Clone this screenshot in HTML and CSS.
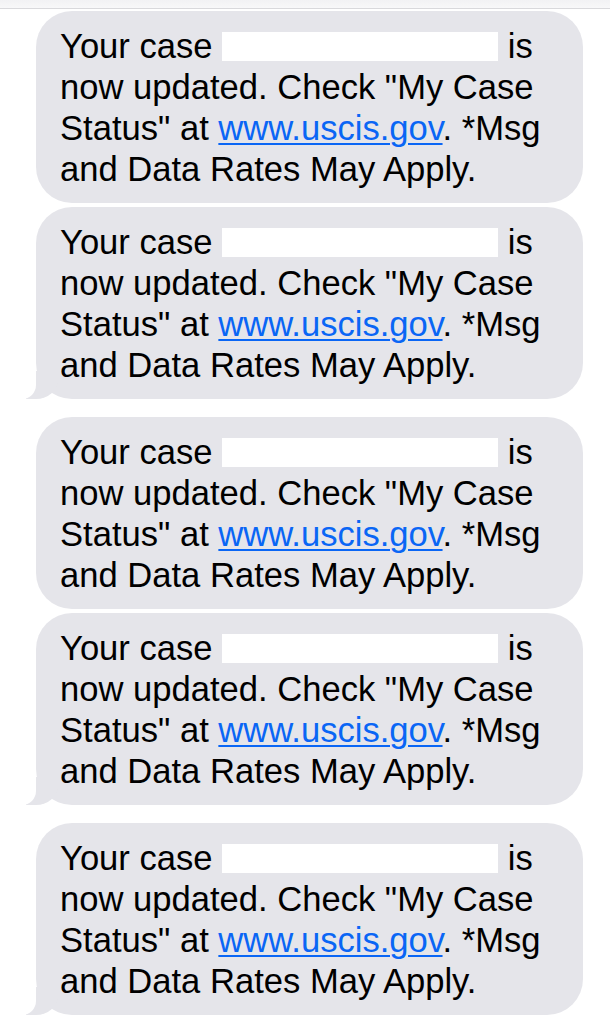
FILE: index.html
```html
<!DOCTYPE html>
<html lang="en">
<head>
  <meta charset="UTF-8">
  <title>Messages</title>
  <link rel="stylesheet" href="styles.css">
</head>
<body>

<div class="top-bar"></div>

<div class="thread">
  <div class="group">
    <div class="bubble">Your case <span class="redacted"></span> is now updated. Check "My Case Status" at <a href="#">www.uscis.gov</a>. *Msg and Data Rates May Apply.</div>
    <div class="bubble tail">Your case <span class="redacted"></span> is now updated. Check "My Case Status" at <a href="#">www.uscis.gov</a>. *Msg and Data Rates May Apply.</div>
  </div>
  <div class="group">
    <div class="bubble">Your case <span class="redacted"></span> is now updated. Check "My Case Status" at <a href="#">www.uscis.gov</a>. *Msg and Data Rates May Apply.</div>
    <div class="bubble tail">Your case <span class="redacted"></span> is now updated. Check "My Case Status" at <a href="#">www.uscis.gov</a>. *Msg and Data Rates May Apply.</div>
  </div>
  <div class="group">
    <div class="bubble tail">Your case <span class="redacted"></span> is now updated. Check "My Case Status" at <a href="#">www.uscis.gov</a>. *Msg and Data Rates May Apply.</div>
  </div>
</div>

</body>
</html>
```

FILE: styles.css
```css
body {
  margin: 0;
  background: white;
  font-family: 'Liberation Sans', Arial, sans-serif;
  overflow: hidden;
}

.top-bar {
  height: 8px;
  background: linear-gradient(#f2f2f4, #f8f8f9);
  border-bottom: 1px solid #d9d9dc;
}

.thread {
  display: flex;
  flex-direction: column;
  gap: 18px;
  padding-top: 2px;
}

.group {
  display: flex;
  flex-direction: column;
  gap: 4px;
}

.bubble {
  position: relative;
  margin-left: 36px;
  width: 547px;
  box-sizing: border-box;
  padding: 15px 20px 13px 24px;
  background: #e5e5ea;
  border-radius: 36px;
  color: #000;
  font-size: 34.6px;
  line-height: 41px;
}

.bubble a {
  color: #0a66f5;
  text-decoration: underline;
  text-decoration-thickness: 2px;
  text-underline-offset: 3px;
}

.redacted {
  display: inline-block;
  width: 276px;
  height: 29px;
  background: white;
  vertical-align: -3px;
}

/* the little tail under the last bubble of a group */
.tail::before {
  content: "";
  position: absolute;
  bottom: 0;
  left: -10px;
  width: 32px;
  height: 28px;
  background: #e5e5ea;
  border-bottom-right-radius: 22px 20px;
}

.tail::after {
  content: "";
  position: absolute;
  bottom: 0;
  left: -16px;
  width: 16px;
  height: 28px;
  background: white;
  border-bottom-right-radius: 14px 14px;
}
```
